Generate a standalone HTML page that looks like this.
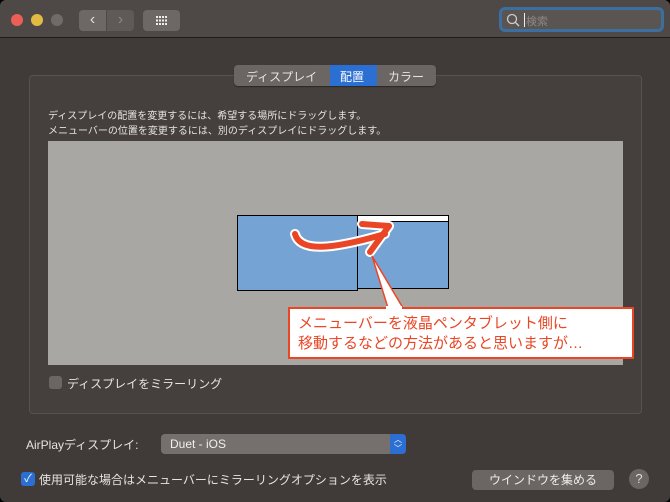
<!DOCTYPE html>
<html><head><meta charset="utf-8"><style>
*{margin:0;padding:0;box-sizing:border-box}
body{width:670px;height:502px;background:#000;font-family:"Liberation Sans","Noto Sans CJK JP",sans-serif;overflow:hidden;position:relative}
.win{position:absolute;left:0;top:0;width:670px;height:502px;background:#403b38;border-radius:6px;overflow:hidden}
.tb{position:absolute;left:0;top:0;width:670px;height:38px;background:#4e4946;border-bottom:1px solid #1e1b1a}
.dot{position:absolute;top:14px;width:12px;height:12px;border-radius:50%}
.abs{position:absolute}
.t{position:absolute;color:#e6e3e1;font-size:11px;white-space:nowrap}
</style></head><body><div class="win">
<div class="tb">
<div class="dot" style="left:11px;background:#ec5f57"></div>
<div class="dot" style="left:31px;background:#e3bb43"></div>
<div class="dot" style="left:51px;background:#6f6b69"></div>
<div class="abs" style="left:79px;top:10px;width:27px;height:21px;background:#6d6865;border-radius:4px 0 0 4px;color:#ddd;font-size:16px;text-align:center;line-height:20px">&lsaquo;</div>
<div class="abs" style="left:107px;top:10px;width:27px;height:21px;background:#5f5a57;border-radius:0 4px 4px 0;color:#888;font-size:16px;text-align:center;line-height:20px">&rsaquo;</div>
<div class="abs" style="left:143px;top:10px;width:37px;height:21px;background:#6d6865;border-radius:4px">
<svg width="37" height="21"><g fill="#eee"><rect x="13" y="6" width="2" height="2"/><rect x="16" y="6" width="2" height="2"/><rect x="19" y="6" width="2" height="2"/><rect x="22" y="6" width="2" height="2"/><rect x="13" y="9.5" width="2" height="2"/><rect x="16" y="9.5" width="2" height="2"/><rect x="19" y="9.5" width="2" height="2"/><rect x="22" y="9.5" width="2" height="2"/><rect x="13" y="13" width="2" height="2"/><rect x="16" y="13" width="2" height="2"/><rect x="19" y="13" width="2" height="2"/><rect x="22" y="13" width="2" height="2"/></g></svg></div>
<div class="abs" style="left:499px;top:7px;width:165px;height:25px;border:3px solid #3a6fa0;border-radius:6px;background:#5a5552">
<svg class="abs" style="left:4px;top:3px" width="14" height="14"><circle cx="6" cy="6" r="4.5" fill="none" stroke="#ccc" stroke-width="1.3"/><line x1="9.3" y1="9.3" x2="13" y2="13" stroke="#ccc" stroke-width="1.4"/></svg>
<div class="abs" style="left:22px;top:3px;width:1px;height:14px;background:#eee"></div>
<div class="t" style="left:24px;top:3px;color:#8d8885">検索</div></div>
</div>
<div class="abs" style="left:29px;top:75px;width:613px;height:339px;border:1px solid #57524f;border-radius:4px;background:#45403d"></div>
<div class="abs" style="left:234px;top:65px;width:202px;height:21px;background:#6b6663;border-radius:4px;box-shadow:0 1px 1px rgba(0,0,0,.4)"></div>
<div class="abs" style="left:330px;top:65px;width:47px;height:21px;background:#2c6fd2"></div>
<div class="t" style="left:246px;top:68px;font-size:12px">ディスプレイ</div>
<div class="t" style="left:340px;top:68px;font-size:12px;color:#fff">配置</div>
<div class="t" style="left:388px;top:68px;font-size:12px">カラー</div>
<div class="t" style="left:48px;top:107px;font-size:10px">ディスプレイの配置を変更するには、希望する場所にドラッグします。</div>
<div class="t" style="left:48px;top:122px;font-size:10px">メニューバーの位置を変更するには、別のディスプレイにドラッグします。</div>
<div class="abs" style="left:48px;top:141px;width:575px;height:224px;background:#a9a7a4"></div>
<div class="abs" style="left:237px;top:215px;width:121px;height:76px;background:#75a3d3;border:1.5px solid #000"></div>
<div class="abs" style="left:357px;top:215px;width:92px;height:74px;background:#75a3d3;border:1.5px solid #000"></div>
<div class="abs" style="left:358px;top:216px;width:90px;height:6px;background:#fff;border-bottom:1.5px solid #000"></div>
<svg class="abs" style="left:0;top:0" width="670" height="502">
<path d="M295 234 C300 252 330 250 385 234" fill="none" stroke="#fff" stroke-width="10" stroke-linecap="round"/>
<path d="M362 224 L389 226 L370 252" fill="none" stroke="#fff" stroke-width="10" stroke-linecap="round" stroke-linejoin="round"/>
<path d="M295 234 C300 252 330 250 385 234" fill="none" stroke="#ea4626" stroke-width="6" stroke-linecap="round"/>
<path d="M362 224 L389 226 L370 252" fill="none" stroke="#ea4626" stroke-width="6" stroke-linecap="round" stroke-linejoin="round"/>
<polygon points="372,256 388,308 403,308" fill="#fff" stroke="#ea4626" stroke-width="1.5"/>
</svg>
<div class="abs" style="left:288px;top:307px;width:346px;height:52px;background:#fff;border:2px solid #ea4626"></div>
<div class="abs" style="left:386px;top:306px;width:16px;height:4px;background:#fff"></div>
<div class="t" style="left:298px;top:312px;font-size:15px;color:#ea4626">メニューバーを液晶ペンタブレット側に</div>
<div class="t" style="left:298px;top:332px;font-size:15px;color:#ea4626">移動するなどの方法があると思いますが…</div>
<div class="abs" style="left:49px;top:376px;width:13px;height:13px;background:#6b6663;border-radius:3px"></div>
<div class="t" style="left:67px;top:375px;font-size:12px">ディスプレイをミラーリング</div>
<div class="t" style="left:26px;top:436px;font-size:12px">AirPlayディスプレイ:</div>
<div class="abs" style="left:161px;top:434px;width:245px;height:20px;background:#75706d;border-radius:4px"></div>
<div class="abs" style="left:390px;top:434px;width:16px;height:20px;background:#2c6fd2;border-radius:0 4px 4px 0;color:#fff;font-size:8px;text-align:center;line-height:9px;padding-top:1px">︿<br>﹀</div>
<div class="t" style="left:170px;top:437px;font-size:12px;color:#f0f0f0">Duet - iOS</div>
<div class="abs" style="left:21px;top:472px;width:14px;height:14px;background:#2c6fd2;border-radius:3px;color:#fff;font-size:11px;line-height:14px;text-align:center">✓</div>
<div class="t" style="left:39px;top:471px;font-size:12px">使用可能な場合はメニューバーにミラーリングオプションを表示</div>
<div class="abs" style="left:472px;top:470px;width:142px;height:20px;background:#6b6663;border-radius:4px;color:#eee;font-size:12px;text-align:center;line-height:20px">ウインドウを集める</div>
<div class="abs" style="left:629px;top:469px;width:20px;height:20px;background:#6b6663;border-radius:50%;color:#ddd;font-size:13px;text-align:center;line-height:20px">?</div>
</div></body></html>
